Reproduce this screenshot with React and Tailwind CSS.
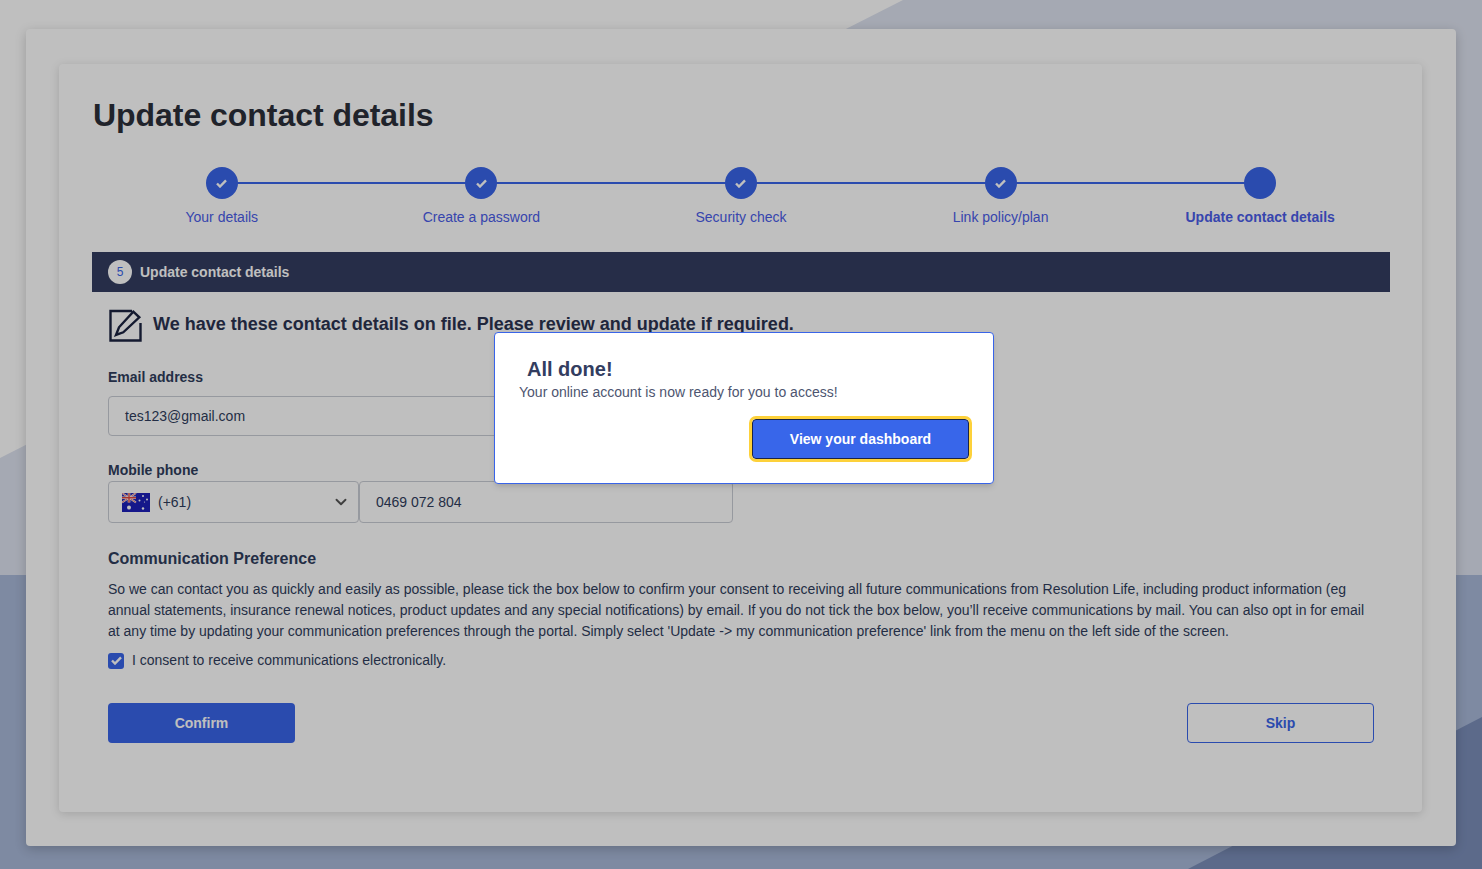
import React, { useState } from "react";
import { ChevronDown } from "lucide-react";

const steps = ["Your details", "Create a password", "Security check", "Link policy/plan", "Update contact details"];

function PageBackground() {
  return (
    <svg className="absolute inset-0 w-full h-full" viewBox="0 0 1482 869" preserveAspectRatio="none" aria-hidden="true">
      <rect width="1482" height="869" fill="#ffffff" />
      <polygon points="903,0 1482,0 1482,575 0,575 0,458" fill="#dde2ef" />
      <polygon points="0,575 1482,575 1482,869 0,869" fill="#a8b8d8" />
      <polygon points="1482,717 1482,869 1188,869" fill="#7b8eb9" />
    </svg>
  );
}

function CheckMark() {
  return (
    <svg width="11" height="9" viewBox="0 0 11 9" fill="none" stroke="currentColor" strokeWidth="2.4" aria-hidden="true">
      <path d="M1 4.5l3 3 6-6.2" />
    </svg>
  );
}

function EditIcon() {
  return (
    <svg width="34" height="34" viewBox="0 0 34 34" fill="none" stroke="#1b2340" strokeWidth="2.4" aria-hidden="true">
      <path d="M24 3H2.5v29.5H32.5V15" />
      <path d="M25.3 3.7l6 5.6-16 15-7.3 2.7 3-7.7z" />
    </svg>
  );
}

function AusFlag() {
  return (
    <svg width="28" height="19" viewBox="0 0 28 19" aria-hidden="true">
      <rect width="28" height="19" fill="#1d1fb8" />
      <rect width="14" height="9.5" fill="#2a2ab0" />
      <path d="M0 0l14 9.5M14 0L0 9.5" stroke="#fff" strokeWidth="1.8" />
      <path d="M0 0l14 9.5M14 0L0 9.5" stroke="#e2443c" strokeWidth="0.7" />
      <path d="M7 0v9.5M0 4.75h14" stroke="#fff" strokeWidth="2.6" />
      <path d="M7 0v9.5M0 4.75h14" stroke="#e2443c" strokeWidth="1.4" />
      <circle cx="7" cy="14.5" r="2" fill="#fff" />
      <circle cx="21" cy="3" r="1" fill="#fff" />
      <circle cx="17.5" cy="7.5" r="1" fill="#fff" />
      <circle cx="25" cy="6.5" r="1" fill="#fff" />
      <circle cx="21" cy="15.5" r="1.2" fill="#fff" />
      <circle cx="22.5" cy="9" r="0.6" fill="#fff" />
    </svg>
  );
}

function Stepper() {
  return (
    <div className="grid grid-cols-5 mt-[31px]">
      {steps.map((step, i) => {
        const last = i === steps.length - 1;
        return (
          <div key={step} className="relative flex flex-col items-center">
            {!last && <div className="absolute top-[15px] left-1/2 w-full h-[2px] bg-[#3964e8]" />}
            <div className="relative w-8 h-8 rounded-full bg-[#3964e8] flex items-center justify-center text-white">
              {!last && <CheckMark />}
            </div>
            <div className={`mt-[9px] text-sm leading-[18px] text-[#4a5ce8] ${last ? "font-bold" : ""}`}>{step}</div>
          </div>
        );
      })}
    </div>
  );
}

export default function App() {
  const [consent, setConsent] = useState(true);

  return (
    <div className="relative h-[869px] overflow-hidden font-['Liberation_Sans',Arial,sans-serif] text-[#2f3d5c]">
      <PageBackground />

      <div className="relative mx-[26px] mt-[29px] h-[817px] pt-[35px] pl-[33px] pr-[34px] bg-white rounded shadow-[0_3px_12px_rgba(0,0,0,0.2)]">
        <div className="h-[748px] pt-[30px] pl-[33px] pr-[32px] bg-white rounded shadow-[0_2px_10px_rgba(0,0,0,0.15)]">
          <h1 className="pl-px text-[32px] leading-[42px] tracking-[-0.04px] font-bold text-[#2b2f3a]">Update contact details</h1>
          <Stepper />

          <div className="mt-[26px] h-10 pl-4 flex items-center gap-2 bg-[#333d60] text-white">
            <span className="w-6 h-6 rounded-full bg-white text-[#3964e8] text-xs flex items-center justify-center">5</span>
            <span className="text-sm font-bold">Update contact details</span>
          </div>

          <div className="px-4">
            <div className="flex items-center gap-[11px] mt-4 h-[34px]">
              <EditIcon />
              <h2 className="-mt-[2px] text-lg font-bold text-[#2b3350]">We have these contact details on file. Please review and update if required.</h2>
            </div>

            <label className="block mt-[26px] text-sm leading-[18px] font-bold">Email address</label>
            <div className="mt-[10px] w-[625px] h-10 px-4 flex items-center text-sm border border-[#c9ccd4] rounded">tes123@gmail.com</div>

            <label className="block mt-[25px] text-sm leading-[18px] font-bold">Mobile phone</label>
            <div className="mt-[2px] flex w-[625px] h-[42px]">
              <div className="w-[251px] pl-[13px] pr-2 flex items-center gap-2 text-sm border border-[#c9ccd4] rounded">
                <AusFlag />
                <span>(+61)</span>
                <ChevronDown className="ml-auto w-[18px] h-[18px] text-[#555]" strokeWidth={2.5} />
              </div>
              <div className="flex-1 px-4 flex items-center text-sm border border-[#c9ccd4] rounded">0469 072 804</div>
            </div>

            <h3 className="mt-[26px] text-base leading-5 font-bold">Communication Preference</h3>
            <p className="mt-[10px] text-sm leading-[21px]">
              So we can contact you as quickly and easily as possible, please tick the box below to confirm your consent to receiving all future communications from Resolution Life, including product information (eg annual statements, insurance renewal notices, product updates and any special notifications) by email. If you do not tick the box below, you’ll receive communications by mail. You can also opt in for email at any time by updating your communication preferences through the portal. Simply select 'Update -&gt; my communication preference' link from the menu on the left side of the screen.
            </p>
            <label className="mt-[8px] flex items-center gap-2 text-sm leading-[21px]">
              <span
                onClick={() => setConsent(!consent)}
                className="w-4 h-4 rounded-[3px] bg-[#3964e8] flex items-center justify-center text-white"
              >
                {consent && <CheckMark />}
              </span>
              I consent to receive communications electronically.
            </label>

            <div className="mt-[32px] flex justify-between">
              <button className="w-[187px] h-10 rounded bg-[#3964e8] text-white text-sm font-bold">Confirm</button>
              <button className="w-[187px] h-10 rounded border border-[#3964e8] text-[#3964e8] text-sm font-bold">Skip</button>
            </div>
          </div>
        </div>
      </div>

      <div className="absolute inset-0 bg-black/25" />

      <div className="absolute left-[494px] top-[332px] w-[500px] h-[152px] bg-white border border-[#3964e8] rounded pt-[24px] px-6 shadow-md">
        <h2 className="pl-2 text-xl leading-6 font-semibold text-[#333d60]">All done!</h2>
        <p className="text-sm leading-[22px] text-[#4d5570]">Your online account is now ready for you to access!</p>
        <div className="mt-4 flex justify-end">
          <button className="w-[217px] h-10 rounded bg-[#3866ea] border border-[#1b2447] text-white text-sm font-bold outline-[3px] outline-[#fdd13a]">
            View your dashboard
          </button>
        </div>
      </div>
    </div>
  );
}
